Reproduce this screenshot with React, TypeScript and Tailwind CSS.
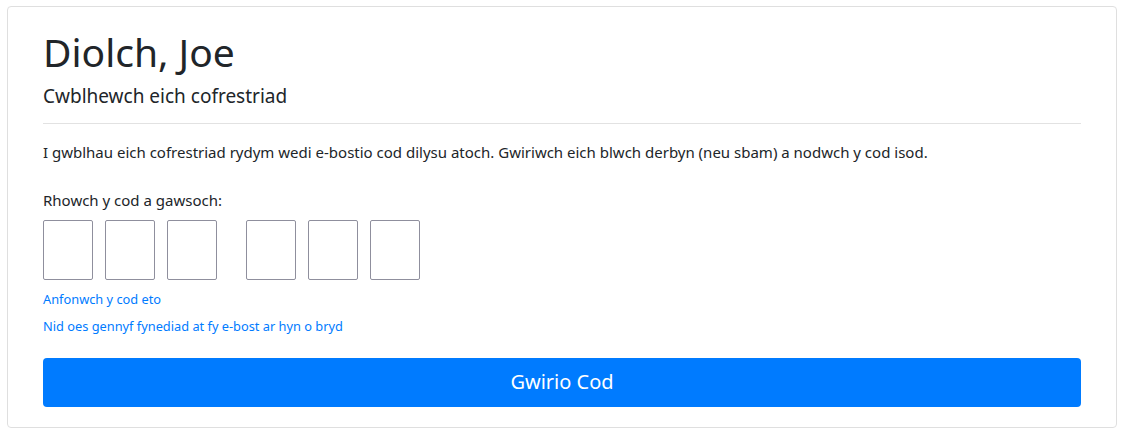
import React from 'react';

export default function App() {
  const boxes = [0, 1, 2];
  return (
    <div className="pt-[6px] px-[7px] font-['Noto_Sans',sans-serif] text-[#212529]">
      <div className="border border-[#dfdfdf] rounded-[4px] bg-white px-[35px] pt-[22px] pb-[20px]">
        {/* Header */}
        <h1 className="text-[39px] leading-[1.2] font-normal">Diolch, Joe</h1>
        <h5 className="text-[19px] leading-[1.2] mt-[9px]">Cwblhewch eich cofrestriad</h5>
        <hr className="border-t border-[#e2e2e2] mt-[15px] mb-[16px]" />

        <p className="text-[15px] leading-[24px]">
          I gwblhau eich cofrestriad rydym wedi e-bostio cod dilysu atoch. Gwiriwch eich blwch derbyn (neu sbam) a nodwch y cod isod.
        </p>

        <label className="block text-[15px] leading-[24px] mt-[24px]">Rhowch y cod a gawsoch:</label>
        <div className="flex mt-[8px]">
          <div className="flex gap-[12px]">
            {boxes.map(i => (
              <input key={i} className="w-[50px] h-[60px] border border-[#8f8f9d] rounded-[2px]" />
            ))}
          </div>
          <div className="flex gap-[12px] ml-[29px]">
            {boxes.map(i => (
              <input key={i} className="w-[50px] h-[60px] border border-[#8f8f9d] rounded-[2px]" />
            ))}
          </div>
        </div>

        <div className="mt-[10px] text-[12.8px] leading-[18px] text-[#007bff]">
          <a className="block">Anfonwch y cod eto</a>
          <a className="block mt-[9px]">Nid oes gennyf fynediad at fy e-bost ar hyn o bryd</a>
        </div>

        <button className="w-full h-[49px] mt-[23px] bg-[#007bff] text-white text-[20px] rounded-[4px]">
          Gwirio Cod
        </button>
      </div>
    </div>
  );
}
